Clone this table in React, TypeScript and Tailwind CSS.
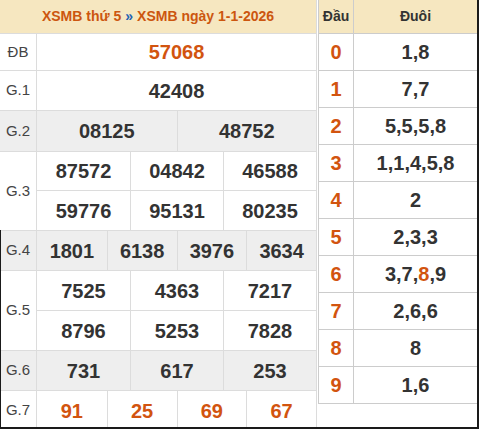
const ORANGE = "text-[#d2540f]";

type Prize = { label: string; rows: string[][]; gray?: boolean; heights: string[]; red?: boolean };

const prizes: Prize[] = [
  { label: "ĐB", rows: [["57068"]], heights: ["h-[37px]"], red: true },
  { label: "G.1", rows: [["42408"]], heights: ["h-[40px]"] },
  { label: "G.2", rows: [["08125", "48752"]], heights: ["h-[41px]"], gray: true },
  {
    label: "G.3",
    rows: [
      ["87572", "04842", "46588"],
      ["59776", "95131", "80235"],
    ],
    heights: ["h-[39px]", "h-[40px]"],
  },
  { label: "G.4", rows: [["1801", "6138", "3976", "3634"]], heights: ["h-[40px]"], gray: true },
  {
    label: "G.5",
    rows: [
      ["7525", "4363", "7217"],
      ["8796", "5253", "7828"],
    ],
    heights: ["h-[40px]", "h-[40px]"],
  },
  { label: "G.6", rows: [["731", "617", "253"]], heights: ["h-[40px]"], gray: true },
  { label: "G.7", rows: [["91", "25", "69", "67"]], heights: ["h-[40px]"], red: true },
];

const gridCols: Record<number, string> = {
  1: "grid-cols-1",
  2: "grid-cols-2",
  3: "grid-cols-3",
  4: "grid-cols-4",
};

const loto: [string, string[]][] = [
  ["0", ["1", "8"]],
  ["1", ["7", "7"]],
  ["2", ["5", "5", "5", "8"]],
  ["3", ["1", "1", "4", "5", "8"]],
  ["4", ["2"]],
  ["5", ["2", "3", "3"]],
  ["6", ["3", "7", "8", "9"]],
  ["7", ["2", "6", "6"]],
  ["8", ["8"]],
  ["9", ["1", "6"]],
];

export default function App() {
  return (
    <div className="relative flex h-[429px] w-[479px] overflow-hidden bg-white font-['Liberation_Sans',Arial,sans-serif] text-[#333]">
      {/* results table */}
      <div className="w-[317px] shrink-0 self-start border-r border-[#dcdcdc]">
        <div className="flex h-[34px] items-center justify-center border-b border-[#dcdcdc] bg-[#f6e7c0] text-[14px] font-bold text-[#cc560f]">
          XSMB thứ 5 <span className="mx-[4px] text-[#1f62b3]">»</span> XSMB ngày 1-1-2026
        </div>
        {prizes.map((p) => (
          <div key={p.label} className={`flex ${p.gray ? "bg-[#eeeeee]" : "bg-white"}`}>
            <div className="flex w-[37px] shrink-0 items-center justify-center border-r border-b border-[#dcdcdc] text-[15px] text-[#444]">
              {p.label}
            </div>
            <div className="flex-1">
              {p.rows.map((row, i) => (
                <div
                  key={i}
                  className={`grid ${gridCols[row.length]} ${p.heights[i]} border-b border-[#dcdcdc]`}
                >
                  {row.map((n, j) => (
                    <div
                      key={j}
                      className={`flex items-center justify-center text-[20px] font-bold ${
                        j > 0 ? "border-l border-[#dcdcdc]" : ""
                      } ${p.red ? ORANGE : ""}`}
                    >
                      {n}
                    </div>
                  ))}
                </div>
              ))}
            </div>
          </div>
        ))}
      </div>

      {/* loto head/tail table */}
      <div className="ml-[1px] w-[160px] shrink-0 self-start border-x border-[#cccccc]">
        <div className="flex h-[34px] border-b border-[#cccccc] bg-[#f6e7c0] text-[14px] font-bold text-[#333]">
          <div className="flex w-[35px] items-center justify-center border-r border-[#cccccc]">Đầu</div>
          <div className="flex flex-1 items-center justify-center">Đuôi</div>
        </div>
        {loto.map(([head, tails]) => (
          <div key={head} className="flex h-[37px] border-b border-[#cccccc] text-[20px] font-bold">
            <div className={`flex w-[35px] items-center justify-center border-r border-[#cccccc] ${ORANGE}`}>
              {head}
            </div>
            <div className="flex flex-1 items-center justify-center">
              {tails.map((t, i) => (
                <span key={i}>
                  {i > 0 && ","}
                  <span className={head === "6" && t === "8" ? ORANGE : ""}>{t}</span>
                </span>
              ))}
            </div>
          </div>
        ))}
      </div>

      {/* dark frame edges from the capture */}
      <div className="absolute top-0 right-0 h-full w-[2px] bg-[#1a1a1a]" />
      <div className="absolute bottom-0 left-0 h-[2px] w-full bg-[#1a1a1a]" />
      <div className="absolute top-[230px] bottom-0 left-0 w-[1px] bg-[#1a1a1a]" />
    </div>
  );
}
